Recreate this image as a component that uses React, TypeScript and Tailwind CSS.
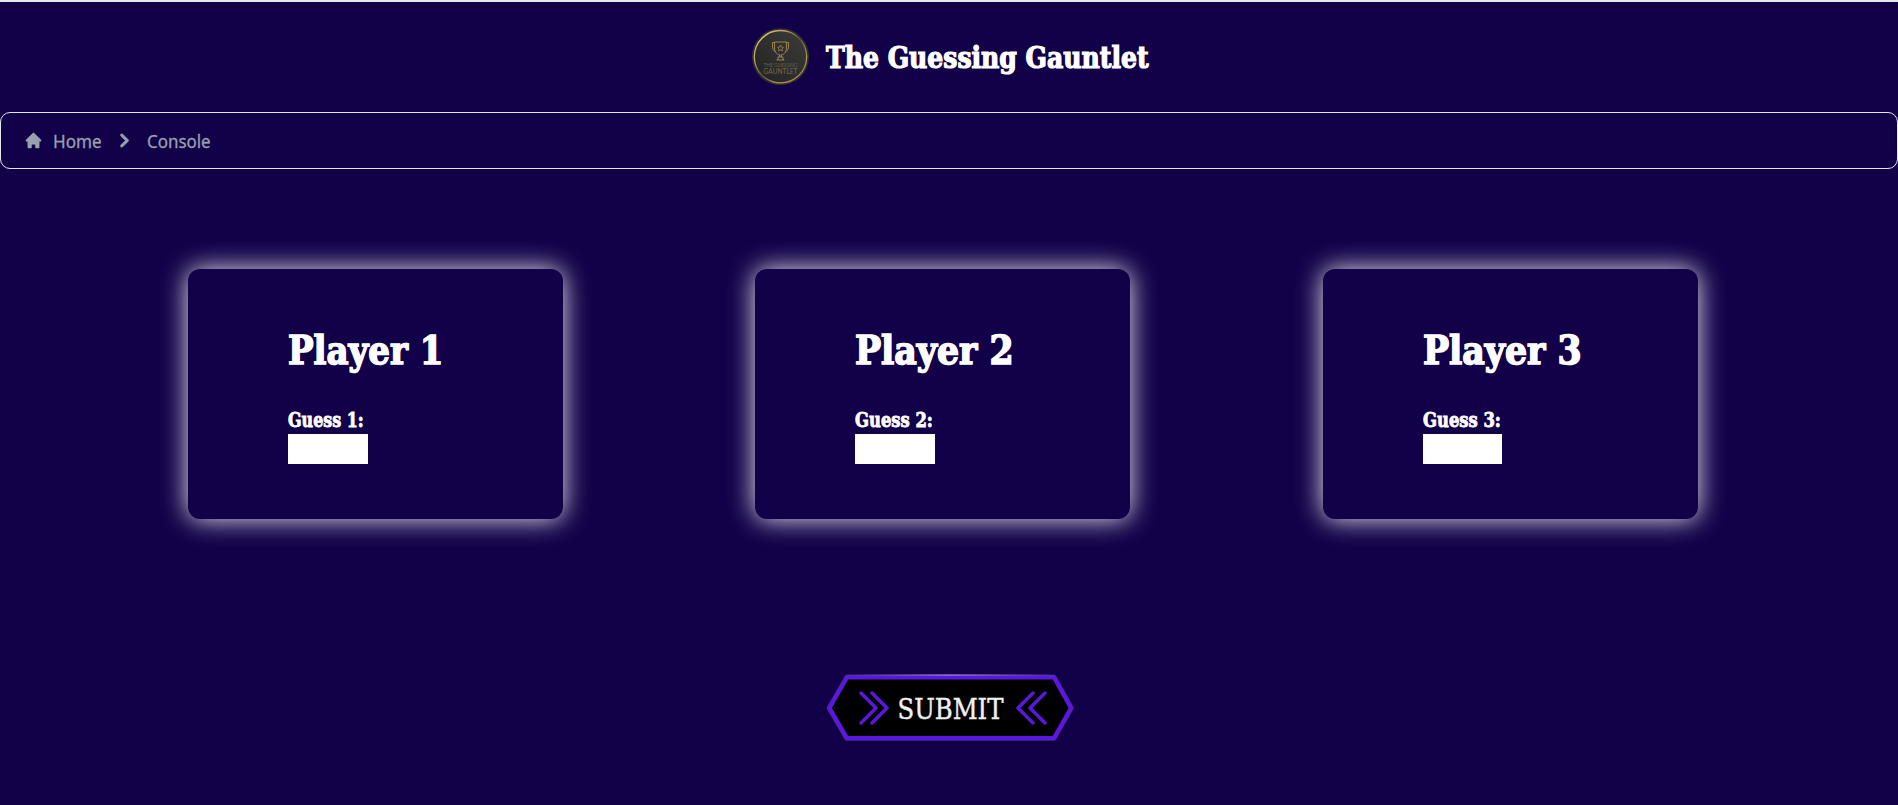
import React from "react";

const slab = "font-['Roboto_Slab','DejaVu_Serif_Condensed','DejaVu_Serif',serif]";

function Logo() {
  return (
    <svg width="58" height="58" viewBox="0 0 58 58" className="shrink-0">
      <defs>
        <linearGradient id="ring" x1="0" y1="0" x2="1" y2="1">
          <stop offset="0" stopColor="#f3dc8a" />
          <stop offset="0.3" stopColor="#b8a068" />
          <stop offset="0.5" stopColor="#5f5238" />
          <stop offset="0.75" stopColor="#b89550" />
          <stop offset="1" stopColor="#8a7040" />
        </linearGradient>
        <linearGradient id="disc" x1="0" y1="1" x2="1" y2="0">
          <stop offset="0" stopColor="#222222" />
          <stop offset="1" stopColor="#3c3c3a" />
        </linearGradient>
      </defs>
      <circle cx="28.500" cy="28.700" r="28.600" fill="#2c2c2c" />
      <circle cx="28.500" cy="28.700" r="26.200" fill="url(#disc)" stroke="url(#ring)" strokeWidth="1.300" />
      <g fill="none" stroke="#9a8150" strokeWidth="1">
        <path d="M22.500 14H34.500V20C34.500 24.500 31.500 27 28.500 27S22.500 24.500 22.500 20Z" />
        <path d="M22.500 14.500H20.500V18C20.500 21 21.500 23 23.500 23.500M34.500 14.500H36.500V18C36.500 21 35.500 23 33.500 23.500" />
        <path d="M27.500 27V29M29.500 27V29M26 29H31V31.500H32V32H25V31.500H26Z" />
        <path d="M28.500 17L29.400 19.200L31.500 19.400L29.900 20.900L30.400 23L28.500 21.900L26.600 23L27.100 20.900L25.500 19.400L27.600 19.200Z" strokeWidth="0.800" />
      </g>
      <text x="28.500" y="38.500" textAnchor="middle" textLength="34" fontSize="4.800" fill="#6b5e48" fontFamily="Lato, sans-serif">THE GUESSING</text>
      <text x="28.500" y="45.500" textAnchor="middle" textLength="34" lengthAdjust="spacingAndGlyphs" fontSize="7.500" fill="#75674c" fontFamily="Lato, sans-serif">GAUNTLET</text>
    </svg>
  );
}

function PlayerCard({ n }: { n: number }) {
  return (
    <section className="h-[250px] w-[375px] shrink-0 rounded-xl bg-[#120048] pl-[100px] pt-[56px] shadow-[0_0_27px_rgba(255,255,255,0.92)]">
      <h2 className={`h-[50px] w-fit origin-left whitespace-nowrap text-[40px] font-bold leading-[50px] [-webkit-text-stroke:1.5px_white] ${n === 1 ? "scale-x-[0.945]" : "scale-x-[0.965]"}`}>Player {n}</h2>
      <label className="mt-[32px] block text-[20px] font-bold leading-[26px]">
        <span className={`block w-fit origin-left whitespace-nowrap [-webkit-text-stroke:0.8px_white] ${n === 1 ? "scale-x-[0.885]" : "scale-x-[0.91]"}`}>Guess {n}:</span>
        <input type="text" className="mt-px block h-[30px] w-[79.5px] bg-white px-2 text-base text-black outline-none" />
      </label>
    </section>
  );
}

function SubmitButton() {
  return (
    <button type="submit" className="block h-[68px] w-[248px]">
      <svg width="248" height="68" viewBox="0 0 248 68">
        <defs>
          <linearGradient id="shine" gradientUnits="userSpaceOnUse" x1="22" y1="0" x2="226" y2="0">
            <stop offset="0" stopColor="#b9a7ee" stopOpacity="0.100" />
            <stop offset="0.500" stopColor="#b9a7ee" />
            <stop offset="1" stopColor="#b9a7ee" stopOpacity="0.100" />
          </linearGradient>
        </defs>
        <path d="M20 3.500H227L244 34L227 64H20L2.500 34Z" fill="#000" stroke="#6b5c96" strokeOpacity="0.550" strokeWidth="5.500" strokeLinejoin="round" />
        <path d="M20 3.500H227L244 34L227 64H20L2.500 34Z" fill="#000" stroke="#5b17e0" strokeWidth="4.200" strokeLinejoin="round" />
        <path d="M20 1H227" stroke="url(#shine)" strokeWidth="1" />
        <path d="M34 19L49 34L34 49M45 19L60 34L45 49M206 19L191 34L206 49M218 19L203 34L218 49" fill="none" stroke="#5b17e0" strokeWidth="3.400" strokeLinecap="round" strokeLinejoin="round" />
        <text x="70.500" y="44.500" fontSize="27.500" textLength="106" lengthAdjust="spacingAndGlyphs" fill="#f0f0f0" stroke="#f0f0f0" strokeWidth="0.400" fontFamily="'Roboto Slab', 'DejaVu Serif Condensed', 'DejaVu Serif', serif">SUBMIT</text>
      </svg>
    </button>
  );
}

export default function App() {
  return (
    <div className={`flex h-[805px] flex-col overflow-hidden border-t-2 border-gray-200 bg-[#120048] text-white ${slab}`}>
      <header className="flex h-[110px] shrink-0 items-center pl-[752px]">
        <Logo />
        <h1 className="ml-4 mt-px origin-left scale-x-[0.93] whitespace-nowrap text-[30px] font-bold leading-10 [-webkit-text-stroke:1.2px_white]">The Guessing Gauntlet</h1>
      </header>
      <nav className="flex h-[57px] shrink-0 items-center rounded-[10px] border border-gray-200 pl-[23px] font-['Noto_Sans',sans-serif] text-[18px] text-gray-400">
        <svg width="19" height="19" viewBox="0 0 20 20" fill="currentColor" className="-mt-px">
          <path d="M10.707 2.293a1 1 0 0 0-1.414 0l-7 7a1 1 0 0 0 1.414 1.414L4 10.414V17a1 1 0 0 0 1 1h2a1 1 0 0 0 1-1v-2a1 1 0 0 1 1-1h2a1 1 0 0 1 1 1v2a1 1 0 0 0 1 1h2a1 1 0 0 0 1-1v-6.586l.293.293a1 1 0 0 0 1.414-1.414z" stroke="currentColor" strokeWidth="0.500" />
        </svg>
        <a href="#home" className="ml-[10px] mt-[2px] w-[50px] origin-left scale-x-[0.95] [-webkit-text-stroke:0.3px_currentColor]">Home</a>
        <svg width="27" height="27" viewBox="0 0 20 20" fill="currentColor" className="-mt-px ml-[8px]">
          <path fillRule="evenodd" d="M7.293 14.707a1 1 0 0 1 0-1.414L10.586 10 7.293 6.707a1 1 0 0 1 1.414-1.414l4 4a1 1 0 0 1 0 1.414l-4 4a1 1 0 0 1-1.414 0z" stroke="currentColor" strokeWidth="0.400" />
        </svg>
        <span className="ml-[9px] mt-[2px] origin-left scale-x-[0.94] [-webkit-text-stroke:0.3px_currentColor]">Console</span>
      </nav>
      <main className="flex flex-col items-center pt-[100px]">
        <div className="flex w-full gap-[192.45px] pl-[188px]">
          <PlayerCard n={1} />
          <PlayerCard n={2} />
          <PlayerCard n={3} />
        </div>
        <div className="mt-[155px] pl-[4px]">
          <SubmitButton />
        </div>
      </main>
    </div>
  );
}
